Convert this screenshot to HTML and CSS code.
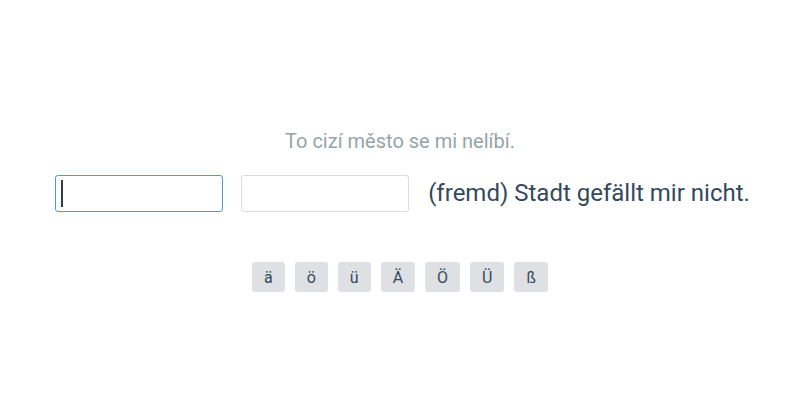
FILE: index.html
```html
<!DOCTYPE html>
<html lang="cs">
<head>
<meta charset="utf-8">
<title>Exercise</title>
<link rel="stylesheet" href="styles.css">
</head>
<body>
<main class="exercise">
  <p class="prompt">To cizí město se mi nelíbí.</p>
  <div class="answer-row">
    <span class="field field-active"><input class="answer" type="text" aria-label="answer 1"></span>
    <span class="field"><input class="answer" type="text" aria-label="answer 2"></span>
    <span class="sentence">(fremd) Stadt gefällt mir nicht.</span>
  </div>
  <div class="keys">
    <button class="key" type="button">ä</button>
    <button class="key" type="button">ö</button>
    <button class="key" type="button">ü</button>
    <button class="key" type="button">Ä</button>
    <button class="key" type="button">Ö</button>
    <button class="key" type="button">Ü</button>
    <button class="key" type="button">ß</button>
  </div>
</main>
</body>
</html>
```
FILE: styles.css
```css
html, body {
  margin: 0;
  padding: 0;
  background: #ffffff;
}
body {
  font-family: Roboto, "Liberation Sans", sans-serif;
  color: #34495e;
}
.exercise {
  display: flex;
  flex-direction: column;
  align-items: center;
  padding-top: 126px;
}
.prompt {
  margin: 0;
  font-size: 20px;
  line-height: 30px;
  color: #95a5a6;
}
.answer-row {
  display: flex;
  align-items: center;
  margin-top: 19px;
  margin-left: 5px;
}
.field {
  position: relative;
  display: block;
  margin-right: 18px;
}
.answer {
  display: block;
  box-sizing: border-box;
  width: 168px;
  height: 37px;
  margin: 0;
  padding: 0 6px;
  border: 1px solid #dcdcdc;
  border-radius: 3px;
  background: #fff;
  font-family: inherit;
  font-size: 18px;
  color: #2c3e50;
  outline: none;
  caret-color: transparent;
}
.field-active .answer {
  border-color: #4a9bd6;
}
.field-active::after {
  content: "";
  position: absolute;
  left: 6px;
  top: 5px;
  width: 1.5px;
  height: 27px;
  background: #2c3e50;
}
.sentence {
  margin-left: 1px;
  font-size: 24px;
  line-height: 37px;
  color: #34495e;
  white-space: nowrap;
}
.keys {
  display: flex;
  gap: 10px;
  margin-top: 50px;
}
.key {
  height: 30px;
  margin: 0;
  padding: 0 12px;
  border: none;
  border-radius: 3px;
  background: #dfe0e3;
  font-family: inherit;
  font-size: 16px;
  color: #34495e;
  cursor: pointer;
}
```
